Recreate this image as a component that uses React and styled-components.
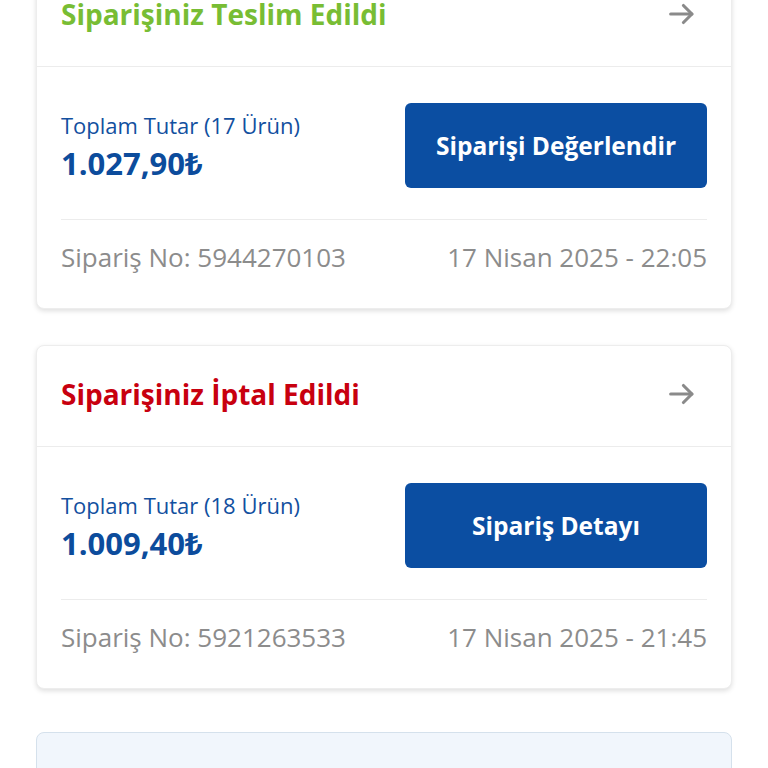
import React from "react";
import styled, { createGlobalStyle } from "styled-components";

const Global = createGlobalStyle`
  html, body { margin: 0; padding: 0; background: #ffffff; }
  body { font-family: "Open Sans", "Noto Sans", "DejaVu Sans", sans-serif; overflow: hidden; }
`;

const Page = styled.div`
  width: 768px;
  height: 768px;
  overflow: hidden;
  background: #ffffff;
`;

const List = styled.div`
  display: flex;
  flex-direction: column;
  gap: 36px;
  padding: 0 36px;
  margin-top: -35px;
`;

const Card = styled.div`
  background: ${(p) => (p.$tinted ? "#f1f6fc" : "#ffffff")};
  border: 1px solid ${(p) => (p.$tinted ? "#d5e1ec" : "#ededed")};
  border-radius: 8px;
  box-shadow: ${(p) => (p.$tinted ? "none" : "0 2px 5px rgba(0,0,0,0.13)")};
  min-height: ${(p) => (p.$tinted ? "120px" : "auto")};
  margin-top: ${(p) => (p.$tinted ? "7px" : "0")};
`;

const Header = styled.div`
  display: flex;
  align-items: center;
  justify-content: space-between;
  box-sizing: border-box;
  height: 101px;
  padding: 0 24px 4px;
  border-bottom: 1px solid #ececec;
`;

const Title = styled.div`
  font-size: 28px;
  font-weight: 700;
  color: ${(p) => p.$color};
`;

const Arrow = styled.svg`
  width: 34px;
  height: 34px;
  margin-right: 8px;
`;

const Inner = styled.div`
  padding: 0 24px;
`;

const Body = styled.div`
  display: flex;
  align-items: center;
  justify-content: space-between;
  padding: 36px 0 31px;
  border-bottom: 1px solid #ececec;
`;

const Totals = styled.div`
  display: flex;
  flex-direction: column;
  gap: 3px;
  padding-top: 2px;
`;

const Label = styled.div`
  font-size: 22px;
  color: #12509f;
`;

const Amount = styled.div`
  font-size: 31px;
  font-weight: 700;
  color: #0c4c9c;
  line-height: 1.3;
`;

const Button = styled.button`
  width: 302px;
  height: 85px;
  border: none;
  border-radius: 6px;
  background: #0b4ea2;
  color: #ffffff;
  font-family: inherit;
  font-size: 24.5px;
  font-weight: 700;
  cursor: pointer;
`;

const Footer = styled.div`
  display: flex;
  align-items: center;
  justify-content: space-between;
  box-sizing: border-box;
  height: 88px;
  padding-bottom: 14px;
  font-size: 26px;
  color: #8c8c8c;
`;

const ArrowIcon = () => (
  <Arrow viewBox="0 0 24 24" fill="none" stroke="#8a8a8a" strokeWidth="2.2" strokeLinecap="round" strokeLinejoin="round">
    <path d="M4 12h15" />
    <path d="M13 6l6 6-6 6" />
  </Arrow>
);

const orders = [
  {
    title: "Siparişiniz Teslim Edildi",
    color: "#78bd34",
    label: "Toplam Tutar (17 Ürün)",
    amount: "1.027,90₺",
    button: "Siparişi Değerlendir",
    no: "Sipariş No: 5944270103",
    date: "17 Nisan 2025 - 22:05",
  },
  {
    title: "Siparişiniz İptal Edildi",
    color: "#c8000f",
    label: "Toplam Tutar (18 Ürün)",
    amount: "1.009,40₺",
    button: "Sipariş Detayı",
    no: "Sipariş No: 5921263533",
    date: "17 Nisan 2025 - 21:45",
  },
];

export default function App() {
  return (
    <Page>
      <Global />
      <List>
        {orders.map((o) => (
          <Card key={o.no}>
            <Header>
              <Title $color={o.color}>{o.title}</Title>
              <ArrowIcon />
            </Header>
            <Inner>
              <Body>
                <Totals>
                  <Label>{o.label}</Label>
                  <Amount>{o.amount}</Amount>
                </Totals>
                <Button>{o.button}</Button>
              </Body>
              <Footer>
                <span>{o.no}</span>
                <span>{o.date}</span>
              </Footer>
            </Inner>
          </Card>
        ))}
        <Card $tinted />
      </List>
    </Page>
  );
}
